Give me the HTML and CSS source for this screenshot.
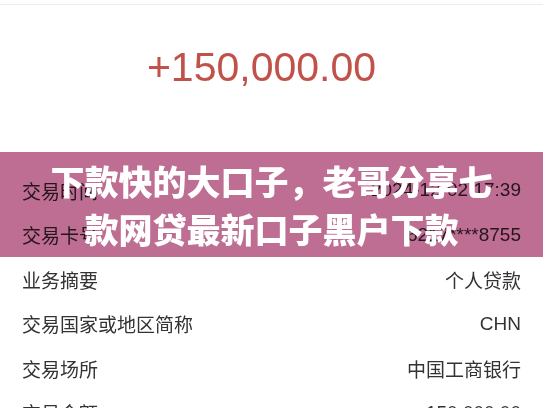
FILE: index.html
```html
<!DOCTYPE html>
<html>
  <head>
    <title>交易详情</title>
    <link rel="stylesheet" href="styles.css">
  </head>
  <body>
    <div class="page">
      <div class="topbar"></div>

      <div class="amount">+150,000.00</div>

      <div class="details">
        <div class="row"><span class="label">交易时间</span><span class="value">2024-12-02 17:39</span></div>
        <div class="row"><span class="label">交易卡号</span><span class="value">6217****8755</span></div>
        <div class="row"><span class="label">业务摘要</span><span class="value">个人贷款</span></div>
        <div class="row"><span class="label">交易国家或地区简称</span><span class="value">CHN</span></div>
        <div class="row"><span class="label">交易场所</span><span class="value">中国工商银行</span></div>
        <div class="row"><span class="label">交易金额</span><span class="value">150,000.00</span></div>
      </div>

      <!-- title banner laid over the list -->
      <div class="banner">
        <div class="banner-bg"></div>
        <h1 class="banner-title">下款快的大口子，老哥分享七<br>款网贷最新口子黑户下款</h1>
      </div>
    </div>
  </body>
</html>
```

FILE: styles.css
```css
html,
body {
  margin: 0;
  padding: 0;
  background: #fff;
}

body {
  font-family: "Liberation Sans", "Noto Sans CJK SC", sans-serif;
  color: #333;
  overflow: hidden;
}

.page {
  position: relative;
  width: 543px;
  height: 408px;
  overflow: hidden;
}

.topbar {
  height: 4px;
  border-bottom: 1px solid #ececec;
}

.amount {
  padding: 38px 20px 77px 0;
  text-align: center;
  font-size: 41px;
  line-height: 48px;
  color: #c1524a;
}

.details {
  padding: 0 22px;
}

.row {
  display: flex;
  justify-content: space-between;
  align-items: center;
  height: 44.5px;
  font-size: 19px;
}

.label {
  font-family: "Noto Sans CJK SC", sans-serif;
}

/* Banner over the list */
.banner {
  position: absolute;
  left: 0;
  top: 152px;
  width: 100%;
  height: 105px;
  display: flex;
  align-items: center;
  justify-content: center;
}

.banner-bg {
  position: absolute;
  inset: 0;
  background: #b9618a;
  opacity: 0.92;
  mix-blend-mode: multiply;
}

.banner-title {
  position: relative;
  margin: 0;
  text-align: center;
  font-family: "Noto Sans CJK SC", sans-serif;
  font-weight: 900;
  font-size: 34px;
  line-height: 48px;
  color: #fff;
}
```
